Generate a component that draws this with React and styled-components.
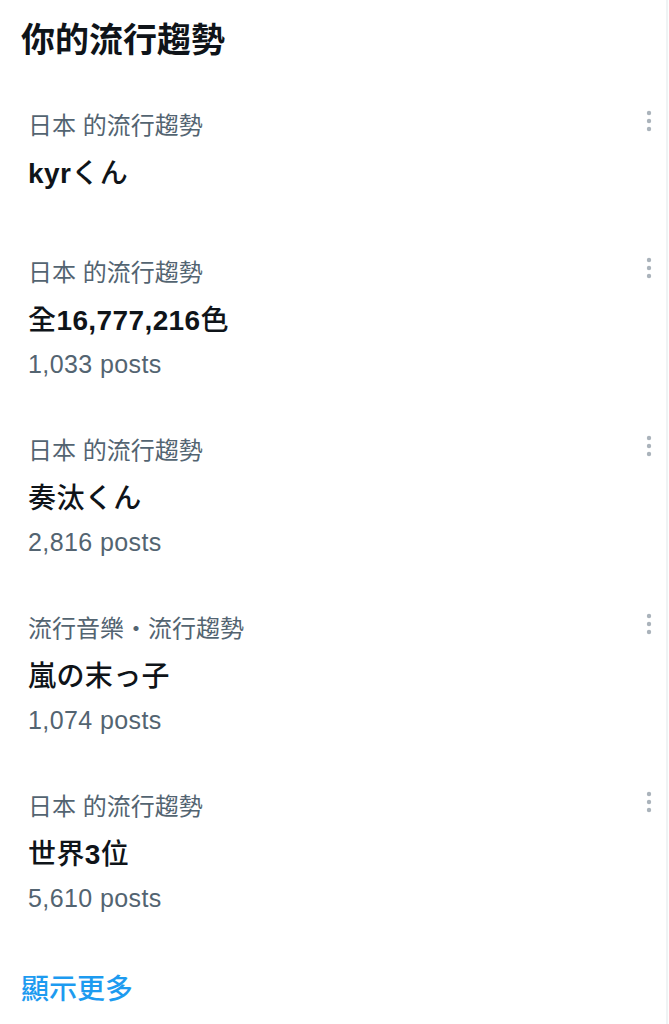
import React from 'react';
import styled, { createGlobalStyle } from 'styled-components';

const Global = createGlobalStyle`
  html, body { margin: 0; padding: 0; background: #ffffff; }
  body { font-family: "Liberation Sans", "Noto Sans CJK TC", sans-serif; }
`;

const Panel = styled.section`
  width: 668px;
  min-height: 1024px;
  box-sizing: border-box;
  border-right: 2px solid #eff3f4;
  padding-top: 18px;
  background: #ffffff;
`;

const Title = styled.h2`
  margin: 0;
  padding: 0 21px 20px;
  font-size: 34px;
  line-height: 44px;
  font-weight: 700;
  color: #0f1419;
`;

const List = styled.div`
  display: flex;
  flex-direction: column;
`;

const Item = styled.div`
  position: relative;
  display: flex;
  flex-direction: column;
  box-sizing: border-box;
  min-height: 147px;
  padding: 28px 28px 27px;
`;

const Category = styled.div`
  font-size: 24px;
  line-height: 32px;
  color: #536471;
`;

const Name = styled.div`
  margin-top: 12px;
  font-size: 28px;
  line-height: 40px;
  letter-spacing: 0.4px;
  font-weight: 500;
  color: #0f1419;
`;

const Latin = styled.span`
  font-weight: 700;
`;

const Posts = styled.div`
  margin-top: 7px;
  font-size: 25px;
  line-height: 32px;
  letter-spacing: 0.4px;
  color: #536471;
`;

const MoreButton = styled.button`
  position: absolute;
  top: 28px;
  right: 12px;
  width: 10px;
  height: 22px;
  padding: 0;
  border: none;
  background: transparent;
  display: flex;
  align-items: center;
  justify-content: center;
`;

const ShowMore = styled.a`
  display: block;
  padding: 29px 21px 27px;
  font-size: 28px;
  line-height: 40px;
  font-weight: 500;
  color: #1d9bf0;
  text-decoration: none;
`;

const Dots = () => (
  <svg width="6" height="22" viewBox="0 0 6 22" aria-hidden="true">
    <circle cx="3" cy="3" r="2.2" fill="#aab3bb" />
    <circle cx="3" cy="11" r="2.2" fill="#aab3bb" />
    <circle cx="3" cy="19" r="2.2" fill="#aab3bb" />
  </svg>
);

const renderName = (text) =>
  text.split(/([\x00-\x7F]+)/).filter(Boolean).map((part, i) =>
    /^[\x00-\x7F]+$/.test(part) ? <Latin key={i}>{part}</Latin> : <span key={i}>{part}</span>
  );

const trends = [
  { category: '日本 的流行趨勢', name: 'kyrくん' },
  { category: '日本 的流行趨勢', name: '全16,777,216色', posts: '1,033 posts' },
  { category: '日本 的流行趨勢', name: '奏汰くん', posts: '2,816 posts' },
  { category: '流行音樂・流行趨勢', name: '嵐の末っ子', posts: '1,074 posts' },
  { category: '日本 的流行趨勢', name: '世界3位', posts: '5,610 posts' },
];

export default function App() {
  return (
    <>
      <Global />
      <Panel>
        <Title>你的流行趨勢</Title>
        <List>
          {trends.map((t, i) => (
            <Item key={i}>
              <Category>{t.category}</Category>
              <Name>{renderName(t.name)}</Name>
              {t.posts && <Posts>{t.posts}</Posts>}
              <MoreButton aria-label="更多">
                <Dots />
              </MoreButton>
            </Item>
          ))}
        </List>
        <ShowMore href="#">顯示更多</ShowMore>
      </Panel>
    </>
  );
}
